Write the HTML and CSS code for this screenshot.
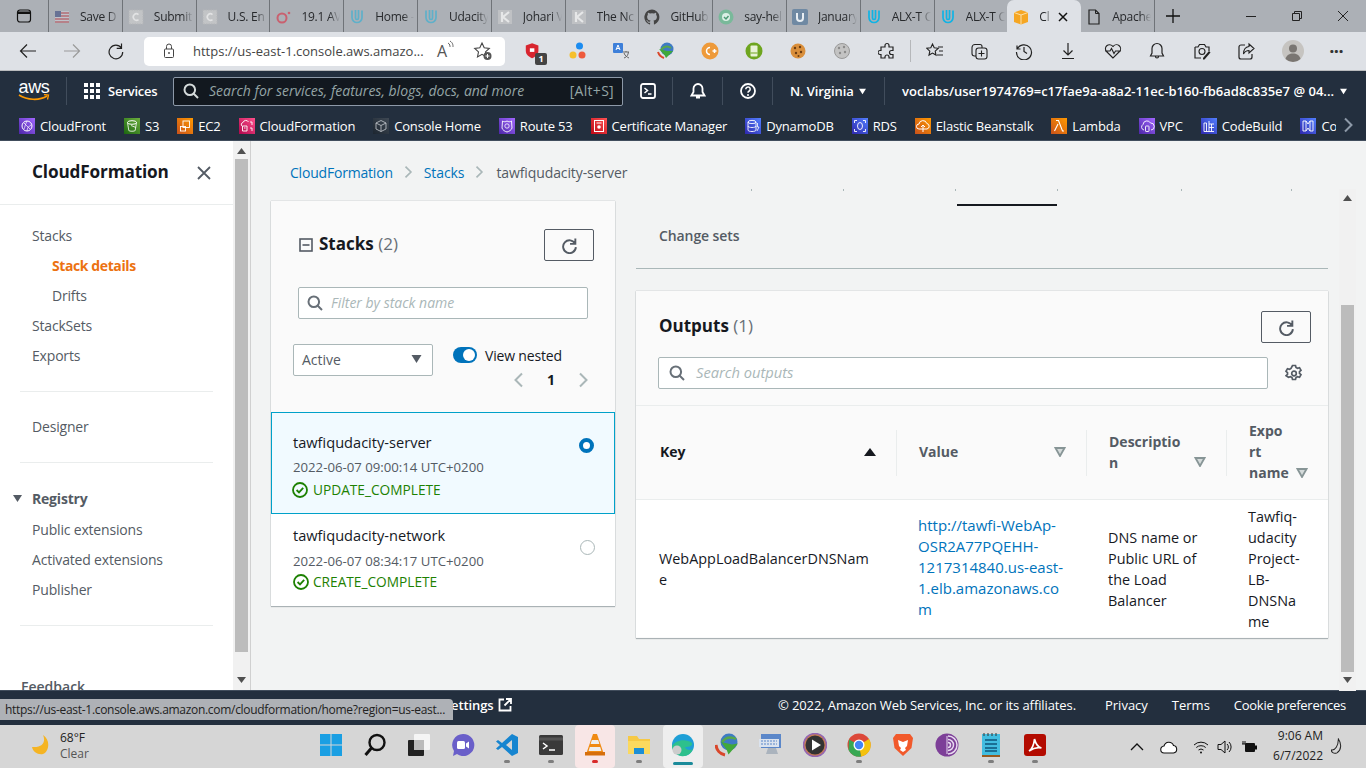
FILE: index.html
```html
<!DOCTYPE html>
<html lang="en">
<head>
<meta charset="utf-8">
<title>CloudFormation</title>
<link rel="stylesheet" href="styles.css">
</head>
<body>
<svg class="defs" width="0" height="0">
  <symbol id="u" viewBox="0 0 16 16"><path d="M3 1.500v7a5 5 0 0 0 10 0v-7M6.500 1v8a1.500 1.500 0 0 0 3 0V1" fill="none" stroke="currentColor" stroke-width="1.700"/></symbol>
  <symbol id="chip" viewBox="0 0 16 16"><rect x="1" y="1" width="14" height="14" fill="#c2c4c6" stroke="#b4b6b9" stroke-dasharray="1.500 1"/><path d="M10.500 5.500a3.200 3.200 0 1 0 0 5" fill="none" stroke="#e2e3e4" stroke-width="1.600"/></symbol>
  <symbol id="k" viewBox="0 0 16 16"><rect x="1" y="1" width="14" height="14" fill="#bfc1c4"/><path d="M5 3v10M12 3 6 8l6 5" fill="none" stroke="#e6e7e8" stroke-width="2.200"/></symbol>
  <symbol id="refresh" viewBox="0 0 16 16"><path d="M13.500 1.500v5h-5M13.300 6.300A6 6 0 1 0 14 9.500" fill="none" stroke="currentColor" stroke-width="1.800"/></symbol>
  <symbol id="search" viewBox="0 0 16 16"><circle cx="6.800" cy="6.800" r="5.300" fill="none" stroke="currentColor" stroke-width="2"/><path d="m10.500 10.500 4.500 4.500" stroke="currentColor" stroke-width="2"/></symbol>
  <symbol id="check" viewBox="0 0 16 16"><circle cx="8" cy="8" r="7" fill="none" stroke="currentColor" stroke-width="1.800"/><path d="m4.600 8 2.400 2.400 4.200-4.600" fill="none" stroke="currentColor" stroke-width="1.800"/></symbol>
  <symbol id="caret" viewBox="0 0 12 10"><path d="M1 1h10L6 9z" fill="currentColor"/></symbol>
  <symbol id="sortd" viewBox="0 0 12 10"><path d="M1.500 1h9L6 9z" fill="#d5dbdb" stroke="currentColor" stroke-width="1.800"/></symbol>
  <symbol id="chev" viewBox="0 0 12 16"><path d="M3 1.500 9.500 8 3 14.500" fill="none" stroke="currentColor" stroke-width="2"/></symbol>
  <symbol id="chevl" viewBox="0 0 12 16"><path d="M9 1.500 2.500 8 9 14.500" fill="none" stroke="currentColor" stroke-width="2"/></symbol>
  <symbol id="scr-up" viewBox="0 0 9 6"><path d="M0 6 4.500 0 9 6z" fill="currentColor"/></symbol>
  <symbol id="scr-dn" viewBox="0 0 9 6"><path d="M0 0h9L4.500 6z" fill="currentColor"/></symbol>
  <symbol id="b-front" viewBox="0 0 16 16"><circle cx="8" cy="8" r="5" fill="none" stroke="#fff"/><path d="M5 5c2 2 4 4 6 6M5 11c1-2 1-4 3-8M8 13c0-3 2-5 4-6" fill="none" stroke="#fff" stroke-width=".7"/></symbol>
  <symbol id="b-s3" viewBox="0 0 16 16"><ellipse cx="8" cy="4.500" rx="4.500" ry="1.800" fill="none" stroke="#fff"/><path d="m3.500 4.500 1.300 8c.5 1 5.900 1 6.400 0l1.300-8M7 7.500l5 2" fill="none" stroke="#fff" stroke-width=".8"/></symbol>
  <symbol id="b-ec2" viewBox="0 0 16 16"><rect x="6" y="3" width="6.500" height="6.500" fill="none" stroke="#fff" stroke-width=".9"/><rect x="3.500" y="8.500" width="5" height="4.500" fill="none" stroke="#fff" stroke-width=".9"/></symbol>
  <symbol id="b-cf" viewBox="0 0 16 16"><path d="M3 8a2 2 0 0 1 1-3.500A3 3 0 0 1 9.500 4M3.500 8H8M3.500 8v5H8V8M5 10h1.500M11 4h2v3M11 10h2v3" fill="none" stroke="#fff" stroke-width=".9"/></symbol>
  <symbol id="b-home" viewBox="0 0 16 16"><path d="M8 2.500 13 5v6l-5 2.500L3 11V5zM3 5l5 2.500L13 5M8 7.500v6" fill="none" stroke="#c8ccd0" stroke-width=".8"/></symbol>
  <symbol id="b-r53" viewBox="0 0 16 16"><path d="M3.500 3c1.500 1 3 1 4.500 0 1.500 1 3 1 4.500 0L13 10c-.5 2-3 3.500-5 4-2-.5-4.500-2-5-4z" fill="none" stroke="#fff" stroke-width=".9"/><circle cx="8" cy="8" r="2.200" fill="none" stroke="#fff" stroke-width=".8"/></symbol>
  <symbol id="b-cert" viewBox="0 0 16 16"><rect x="3.500" y="2.500" width="9" height="11" fill="none" stroke="#fff"/><path d="M5.500 5h5" stroke="#fff"/><circle cx="8" cy="9" r="1.800" fill="#fff"/></symbol>
  <symbol id="b-ddb" viewBox="0 0 16 16"><ellipse cx="7" cy="4" rx="4" ry="1.600" fill="none" stroke="#fff" stroke-width=".9"/><path d="M3 4v8c0 2 8 2 8 0V4M3 8c0 2 8 2 8 0" fill="none" stroke="#fff" stroke-width=".9"/><path d="M12.500 5v4h1.500l-2 4" fill="none" stroke="#fff" stroke-width=".8"/></symbol>
  <symbol id="b-rds" viewBox="0 0 16 16"><path d="M2.500 5V2.500H5M11 2.500h2.500V5M2.500 11v2.500H5M13.500 11v2.500H11" fill="none" stroke="#fff" stroke-width=".9"/><ellipse cx="8" cy="8" rx="2.500" ry="3.500" fill="none" stroke="#fff" stroke-width=".9"/></symbol>
  <symbol id="b-eb" viewBox="0 0 16 16"><path d="M4 11a2.500 2.500 0 0 1 0-5 4 4 0 0 1 7.800-.5A2.800 2.800 0 0 1 12 11zM8 7v7M6 9l2-2 2 2" fill="none" stroke="#fff"/></symbol>
  <symbol id="b-lam" viewBox="0 0 16 16"><path d="M5 2.500h2.500l4 10.500H13M7 6l-3.500 7" fill="none" stroke="#fff" stroke-width="1.100"/></symbol>
  <symbol id="b-vpc" viewBox="0 0 16 16"><path d="M5 12a3 3 0 0 1-1-5.500A4 4 0 0 1 11.500 5 3.500 3.500 0 0 1 12 12" fill="none" stroke="#fff" stroke-width=".9"/><rect x="6.500" y="8" width="3.500" height="5.500" rx=".6" fill="none" stroke="#fff" stroke-width=".9"/></symbol>
  <symbol id="b-build" viewBox="0 0 16 16"><path d="M3 13.500h10M3 13.500V5h2.500v8.500M8 13.500V3M8 6h5M10.500 6v7.500M8 9.500h5" fill="none" stroke="#fff" stroke-width=".9"/></symbol>
  <symbol id="b-co" viewBox="0 0 16 16"><path d="M3 3h3l2 3 2-3h3v10h-3l-2-3-2 3H3zM6 3v10M10 3v10" fill="none" stroke="#fff" stroke-width=".9"/></symbol>
</svg>

<div class="app">
  <header class="tabs">
    <div class="tab-ctl"><svg width="16" height="16" viewBox="0 0 16 16"><rect x="1.500" y="2" width="13" height="12" rx="2.500" fill="none" stroke="#111" stroke-width="1.200"/><path d="M2 3.500h12v2.500H2z" fill="#111"/></svg></div>
    <div class="tab"><svg class="fav dim" viewBox="0 0 16 16"><path d="M1 2h14v12H1z" fill="#c3c6ce"/><path d="M1 2h6v6H1z" fill="#5c6890"/><path d="M7 4h8M7 7h8M1 10h14M1 13h14" stroke="#b5606a" stroke-width="1.300"/></svg><span class="tab-t">Save D</span></div>
    <div class="tab"><svg class="fav"><use href="#chip"/></svg><span class="tab-t">Submit</span></div>
    <div class="tab"><svg class="fav"><use href="#chip"/></svg><span class="tab-t">U.S. En</span></div>
    <div class="tab"><svg class="fav" viewBox="0 0 16 16"><circle cx="7" cy="9" r="4.500" fill="none" stroke="#c9606f" stroke-width="2"/><circle cx="14" cy="4" r="1.300" fill="#c9606f"/></svg><span class="tab-t">19.1 AV</span></div>
    <div class="tab"><svg class="fav tl"><use href="#u"/></svg><span class="tab-t">Home -</span></div>
    <div class="tab"><svg class="fav tl"><use href="#u"/></svg><span class="tab-t">Udacity</span></div>
    <div class="tab"><svg class="fav"><use href="#k"/></svg><span class="tab-t">Johari V</span></div>
    <div class="tab"><svg class="fav"><use href="#k"/></svg><span class="tab-t">The Nc</span></div>
    <div class="tab"><svg class="fav" viewBox="0 0 16 16"><path d="M8 .500a7.700 7.700 0 0 0-2.400 15c.4 0 .5-.2.500-.4v-1.400c-2.100.5-2.600-1-2.600-1-.3-.900-.9-1.100-.9-1.100-.7-.5 0-.5 0-.5.800 0 1.200.8 1.200.8.700 1.200 1.800.9 2.300.7 0-.5.300-.9.500-1.100-1.700-.2-3.500-.9-3.500-3.800 0-.8.300-1.500.8-2-.1-.2-.3-1 .1-2 0 0 .6-.2 2.100.8a7 7 0 0 1 3.800 0c1.500-1 2.100-.8 2.100-.8.400 1 .2 1.800.1 2 .5.500.8 1.200.8 2 0 2.900-1.800 3.600-3.500 3.800.3.200.5.700.5 1.400v2.100c0 .2.100.4.500.4A7.700 7.700 0 0 0 8 .500" fill="#444"/></svg><span class="tab-t">GitHub</span></div>
    <div class="tab"><svg class="fav" viewBox="0 0 16 16"><circle cx="8" cy="8" r="7.500" fill="#79b99a"/><circle cx="8" cy="8" r="4" fill="#dcefe6"/><path d="m6 8 2 2 2.500-3" fill="none" stroke="#4c9a74" stroke-width="1.500"/></svg><span class="tab-t">say-hel</span></div>
    <div class="tab"><svg class="fav" viewBox="0 0 16 16"><rect width="16" height="16" rx="2" fill="#6f89a3"/><path d="M5 4v5a3 3 0 0 0 6 0V4" fill="none" stroke="#e8eef3" stroke-width="2"/></svg><span class="tab-t">January</span></div>
    <div class="tab"><svg class="fav bl"><use href="#u"/></svg><span class="tab-t">ALX-T C</span></div>
    <div class="tab"><svg class="fav bl"><use href="#u"/></svg><span class="tab-t">ALX-T C</span></div>
    <div class="tab tab-active"><svg class="fav" viewBox="0 0 16 16"><path d="M8 1 15 3.500v9.500L8 15.500 1 13V3.500z" fill="#f5a623"/><path d="M1 3.500 8 6l7-2.500M8 6v9.500" fill="none" stroke="#fce0a8" stroke-width="1"/></svg><span class="tab-t tab-t-s">Clo</span><svg class="tab-x" viewBox="0 0 10 10"><path d="m1 1 8 8M9 1 1 9" stroke="#111" stroke-width="1.500"/></svg></div>
    <div class="tab tab-last"><svg class="fav" viewBox="0 0 16 16"><path d="M3 1h6.500L13 4.500V15H3z" fill="none" stroke="#222" stroke-width="1.200"/><path d="M9.500 1v3.500H13" fill="none" stroke="#222"/></svg><span class="tab-t">Apache</span></div>
    <div class="tab-new"><svg width="16" height="16" viewBox="0 0 16 16"><path d="M8 1v14M1 8h14" stroke="#111" stroke-width="1.300"/></svg></div>
    <div class="win">
      <svg width="12" height="12" viewBox="0 0 12 12"><path d="M1 6.500h10" stroke="#222"/></svg>
      <svg width="12" height="12" viewBox="0 0 12 12"><path d="M1.500 3.500h7v7h-7zM3.500 3.500v-2h7v7h-2" fill="none" stroke="#222"/></svg>
      <svg width="12" height="12" viewBox="0 0 12 12"><path d="m1 1 10 10M11 1 1 11" stroke="#222"/></svg>
    </div>
  </header>

  <nav class="toolbar">
    <div class="tb-nav">
      <svg class="tb-ic" viewBox="0 0 18 18"><path d="M17 9H1.500M8 2.500 1.500 9 8 15.500" fill="none" stroke="#222" stroke-width="1.200"/></svg>
      <svg class="tb-ic" viewBox="0 0 18 18"><path d="M1 9h15.500M10 2.500 16.500 9 10 15.500" fill="none" stroke="#9a9a9a" stroke-width="1.200"/></svg>
      <svg class="tb-ic" viewBox="0 0 18 18"><path d="M14.500 1.500v4.800H9.700M14.400 6a6.800 6.800 0 1 0 1.300 4" fill="none" stroke="#222" stroke-width="1.200"/></svg>
    </div>
    <div class="address">
      <svg width="14" height="16" viewBox="0 0 14 16"><rect x="2.500" y="6" width="9" height="8.500" rx="1" fill="none" stroke="#444"/><path d="M4.500 6V3.500a2.500 2.500 0 0 1 5 0V6" fill="none" stroke="#444"/><circle cx="7" cy="10" r=".9" fill="#444"/></svg>
      <span class="url">https://us-east-1.console.aws.amazo...</span>
      <span class="aloud">A<svg width="7" height="12" viewBox="0 0 7 12"><path d="M1 3c2 1 2 3 2 4M3 1c3 2 3 4 3 6" fill="none" stroke="#555" stroke-width=".9"/></svg></span>
      <svg width="20" height="20" viewBox="0 0 20 20"><path d="m9 2 2.200 4.800 5.100.6-3.800 3.500 1 5-4.500-2.600-4.500 2.600 1-5L1.700 7.400l5.100-.6z" fill="none" stroke="#444" stroke-width="1.100"/><circle cx="14.500" cy="15" r="4" fill="#555"/><path d="M14.500 13v4M12.500 15h4" stroke="#fff"/></svg>
    </div>
    <div class="tb-ext">
      <span class="cell"><svg class="ic18" viewBox="0 0 18 20"><path d="M8 1.500 15 4v6c0 4-3.500 6.500-7 8-3.500-1.500-7-4-7-8V4z" fill="#d8252f"/><rect x="5.500" y="7" width="5" height="4" fill="#fff"/></svg><span class="badge">1</span></span>
      <span class="cell"><svg class="ic18" viewBox="0 0 18 18"><circle cx="11.500" cy="4" r="3.500" fill="#1c8cf0"/><circle cx="5" cy="13" r="3.500" fill="#f6c02c"/><circle cx="14" cy="13" r="3.500" fill="#ee5a3c"/></svg></span>
      <span class="cell"><svg class="ic18" viewBox="0 0 18 18"><rect x="1" y="1" width="10" height="10" rx="1" fill="#3d7fd9"/><path d="m4 8 2-5 2 5M4.800 6.500h2.400" fill="none" stroke="#fff"/><path d="M11 10h6M14 9v1M12 16c3-1 4-3 4.500-6M12 11c1 3 3 4 5 5" fill="none" stroke="#666"/></svg></span>
      <span class="cell"><svg class="ic18" viewBox="0 0 18 18"><circle cx="10" cy="7" r="6.500" fill="#3e7bc4"/><path d="M4 8c2-3 6-5 10-2" fill="none" stroke="#58a84a" stroke-width="2"/><path d="m2 7 8 2 6 0-7 7-1.500-3z" fill="#3fa83a"/><path d="M1 10c1 3 3 5 6 6" fill="none" stroke="#d9472b" stroke-width="2"/></svg></span>
      <span class="cell"><svg class="ic18" viewBox="0 0 18 18"><circle cx="9" cy="9" r="8.500" fill="#ee9a3a"/><path d="M9 5.500a3.500 3.500 0 1 0 0 7M11.500 9h4M13.500 7v4" fill="none" stroke="#fff" stroke-width="1.500"/></svg></span>
      <span class="cell"><svg class="ic18" viewBox="0 0 18 18"><circle cx="9" cy="9" r="8.500" fill="#6ea51f"/><rect x="5.500" y="3.500" width="7" height="11" rx="1" fill="#e8f2d6"/><path d="M5.500 11h7" stroke="#6ea51f"/></svg></span>
      <span class="cell"><svg class="ic18" viewBox="0 0 18 18"><circle cx="9" cy="9" r="7.500" fill="#d98f3c"/><circle cx="6" cy="6" r="1.200" fill="#6b3d12"/><circle cx="11" cy="5" r="1.200" fill="#6b3d12"/><circle cx="12" cy="10" r="1.200" fill="#6b3d12"/><circle cx="7" cy="11" r="1.200" fill="#6b3d12"/><circle cx="9.500" cy="14" r="1" fill="#6b3d12"/></svg></span>
      <span class="cell"><svg class="ic18" viewBox="0 0 18 18"><circle cx="9" cy="9" r="7.500" fill="#c3c3c3" stroke="#999"/><circle cx="6" cy="6" r="1.200" fill="#8b8b8b"/><circle cx="11" cy="5" r="1.200" fill="#8b8b8b"/><circle cx="12" cy="10" r="1.200" fill="#8b8b8b"/><circle cx="7" cy="11" r="1.200" fill="#8b8b8b"/></svg></span>
      <span class="cell"><svg class="ic18" viewBox="0 0 18 18"><path d="M7 3.500a2 2 0 0 1 4 0V5h4v3.500h-1.500a2 2 0 0 0 0 4H15V16H11v-1a2 2 0 0 0-4 0v1H3v-3.500H2a2 2 0 0 1 0-4h1V5h4z" fill="none" stroke="#222" stroke-width="1.200"/></svg></span>
      <span class="tb-sep"></span>
      <span class="cell cell-b"><svg class="ic18" viewBox="0 0 18 18"><path d="m6.500 2 1.700 3.800 4 .5-3 2.800.8 4-3.500-2-3.500 2 .8-4-3-2.800 4-.5z" fill="none" stroke="#222" stroke-width="1.100"/><path d="M12 5h5M13 9h4M11 13h6" stroke="#222" stroke-width="1.100"/></svg></span>
      <span class="cell cell-b"><svg class="ic18" viewBox="0 0 18 18"><rect x="6" y="6" width="11" height="11" rx="2.500" fill="none" stroke="#222" stroke-width="1.100"/><path d="M11.500 8.500v6M8.500 11.500h6M6 14H4.500A2.500 2.500 0 0 1 2 11.500V5.500A3 3 0 0 1 5 2.500h5a2 2 0 0 1 2 2V6" fill="none" stroke="#222" stroke-width="1.100"/></svg></span>
      <span class="cell cell-b"><svg class="ic18" viewBox="0 0 18 18"><path d="M2 3.500v3.500h3.500M2.300 7A7.500 7.500 0 1 1 1.500 10M9 5v4.500l3 2" fill="none" stroke="#222" stroke-width="1.200"/></svg></span>
      <span class="cell cell-b"><svg class="ic18" viewBox="0 0 18 18"><path d="M9 1v12M4.500 8.500 9 13l4.500-4.500M3 16.500h12" fill="none" stroke="#222" stroke-width="1.200"/></svg></span>
      <span class="cell cell-b"><svg class="ic18" viewBox="0 0 18 18"><path d="M9 16 2.500 9.500a4 4 0 0 1 6-5.500l.5.500.5-.5a4 4 0 0 1 6 5.500zM1 9h5l1.500-2.500 2.500 5L11.500 9H17" fill="none" stroke="#222" stroke-width="1.100"/></svg></span>
      <span class="cell cell-b"><svg class="ic18" viewBox="0 0 18 18"><path d="M9 1.500a5 5 0 0 0-5 5V11l-1.500 3h13L14 11V6.500a5 5 0 0 0-5-5zM7.500 14.500a1.500 1.500 0 0 0 3 0" fill="none" stroke="#222" stroke-width="1.200"/></svg></span>
      <span class="cell cell-b"><svg class="ic18" viewBox="0 0 18 18"><path d="M2 5h3l1.500-2.500h5L13 5h3v4M2 5v11h6" fill="none" stroke="#222" stroke-width="1.200"/><circle cx="9" cy="9.500" r="3" fill="none" stroke="#222" stroke-width="1.100"/><path d="m10 16 6-7 1.500 1.500-6 7H10z" fill="#222"/></svg></span>
      <span class="cell cell-b"><svg class="ic18" viewBox="0 0 18 18"><path d="M8 3H4a2 2 0 0 0-2 2v10a2 2 0 0 0 2 2h9a2 2 0 0 0 2-2v-3" fill="none" stroke="#222" stroke-width="1.200"/><path d="m12 2 5 4.500L12 11V8.500c-3 0-4.500 1.500-5.500 3.500 0-4 2-7 5.500-7.500z" fill="none" stroke="#222" stroke-width="1.100"/></svg></span>
      <span class="cell cell-b"><svg class="avatar" viewBox="0 0 22 22"><circle cx="11" cy="11" r="11" fill="#c6c4c1"/><circle cx="11" cy="8.500" r="4" fill="#7a7672"/><path d="M3.500 19c1-4 4-5.500 7.500-5.500s6.500 1.500 7.500 5.500a11 11 0 0 1-15 0z" fill="#7a7672"/></svg></span>
      <span class="more">···</span>
    </div>
  </nav>

  <div class="aws-nav">
    <div class="aws-top">
      <span class="logo">
        <span class="logo-t">aws</span>
        <svg width="32" height="8" viewBox="0 0 32 8"><path d="M1 1c8 5 20 6 28 1" fill="none" stroke="#f90" stroke-width="1.700"/><path d="m26 .5 4.500.5-1 4.500" fill="none" stroke="#f90" stroke-width="1.300"/></svg>
      </span>
      <i class="div d1"></i>
      <span class="services"><svg width="16" height="16" viewBox="0 0 16 16"><path d="M0 0h4v4H0zM6 0h4v4H6zM12 0h4v4h-4zM0 6h4v4H0zM6 6h4v4H6zM12 6h4v4h-4zM0 12h4v4H0zM6 12h4v4H6zM12 12h4v4h-4z" fill="#fff"/></svg><b>Services</b></span>
      <div class="global-search">
        <svg width="16" height="16" class="gs-ic"><use href="#search"/></svg>
        <span class="gs-t">Search for services, features, blogs, docs, and more</span>
        <span class="gs-k">[Alt+S]</span>
      </div>
      <span class="nic shell"><svg width="16" height="16" viewBox="0 0 16 16"><rect x="1" y="1" width="14" height="14" rx="2" fill="none" stroke="#fff" stroke-width="1.800"/><path d="m4.500 5 3 2.500-3 2.500M8 11h3.500" fill="none" stroke="#fff" stroke-width="1.500"/></svg></span>
      <i class="div"></i>
      <span class="nic"><svg width="16" height="18" viewBox="0 0 16 18"><path d="M8 2a4.500 4.500 0 0 0-4.500 4.500V10L1.500 13.500h13L12.500 10V6.500A4.500 4.500 0 0 0 8 2zM6 15.500h4" fill="none" stroke="#fff" stroke-width="1.800"/></svg></span>
      <i class="div"></i>
      <span class="nic"><svg width="16" height="16" viewBox="0 0 16 16"><circle cx="8" cy="8" r="7" fill="none" stroke="#fff" stroke-width="1.800"/><path d="M5.800 6.200a2.200 2.200 0 1 1 3.400 1.800c-.8.500-1.200 1-1.200 1.800" fill="none" stroke="#fff" stroke-width="1.500"/><circle cx="8" cy="12" r="1" fill="#fff"/></svg></span>
      <i class="div"></i>
      <span class="region"><b>N. Virginia</b><svg class="wc" width="9" height="7"><use href="#caret"/></svg></span>
      <i class="div"></i>
      <span class="account"><b>voclabs/user1974769=c17fae9a-a8a2-11ec-b160-fb6ad8c835e7 @ 04...</b><svg class="wc" width="9" height="7"><use href="#caret"/></svg></span>
    </div>
    <div class="bookmarks">
      <a class="bm"><svg class="bmi c-pur"><use href="#b-front"/></svg>CloudFront</a>
      <a class="bm"><svg class="bmi c-grn"><use href="#b-s3"/></svg>S3</a>
      <a class="bm"><svg class="bmi c-org"><use href="#b-ec2"/></svg>EC2</a>
      <a class="bm"><svg class="bmi c-pnk"><use href="#b-cf"/></svg>CloudFormation</a>
      <a class="bm"><svg class="bmi c-dk"><use href="#b-home"/></svg>Console Home</a>
      <a class="bm"><svg class="bmi c-pur"><use href="#b-r53"/></svg>Route 53</a>
      <a class="bm"><svg class="bmi c-red"><use href="#b-cert"/></svg>Certificate Manager</a>
      <a class="bm"><svg class="bmi c-blu"><use href="#b-ddb"/></svg>DynamoDB</a>
      <a class="bm"><svg class="bmi c-blu"><use href="#b-rds"/></svg>RDS</a>
      <a class="bm"><svg class="bmi c-org"><use href="#b-eb"/></svg>Elastic Beanstalk</a>
      <a class="bm"><svg class="bmi c-org"><use href="#b-lam"/></svg>Lambda</a>
      <a class="bm"><svg class="bmi c-pur"><use href="#b-vpc"/></svg>VPC</a>
      <a class="bm"><svg class="bmi c-blu"><use href="#b-build"/></svg>CodeBuild</a>
      <a class="bm bm-cut"><svg class="bmi c-blu"><use href="#b-co"/></svg>Co</a>
      <svg class="bm-next" width="12" height="16"><use href="#chev"/></svg>
    </div>
  </div>

  <main class="main">
    <aside class="side">
      <div class="side-in">
        <div class="side-h"><span class="side-title">CloudFormation</span><svg width="14" height="14" viewBox="0 0 14 14"><path d="m1 1 12 12M13 1 1 13" stroke="#545b64" stroke-width="1.800"/></svg></div>
        <ul class="side-l">
          <li>Stacks</li>
          <li class="sub act">Stack details</li>
          <li class="sub">Drifts</li>
          <li>StackSets</li>
          <li>Exports</li>
        </ul>
        <hr class="side-hr">
        <ul class="side-l side-l2"><li>Designer</li></ul>
        <hr class="side-hr">
        <div class="side-reg"><svg width="11" height="9"><use href="#caret"/></svg><b>Registry</b></div>
        <ul class="side-l side-l3">
          <li>Public extensions</li>
          <li>Activated extensions</li>
          <li>Publisher</li>
        </ul>
        <hr class="side-hr">
        <div class="feedback">Feedback</div>
      </div>
      <div class="scr side-scr">
        <svg class="scr-a" width="9" height="6"><use href="#scr-up"/></svg>
        <div class="thumb th-side"></div>
        <svg class="scr-a" width="9" height="6"><use href="#scr-dn"/></svg>
      </div>
    </aside>

    <div class="content">
      <div class="crumbs">
        <a>CloudFormation</a><svg width="10" height="14"><use href="#chev"/></svg><a class="cr-2">Stacks</a><svg width="10" height="14"><use href="#chev"/></svg><span>tawfiqudacity-server</span>
      </div>
      <div class="cols">
        <section class="card stacks">
          <div class="st-h">
            <svg class="minus" width="14" height="14" viewBox="0 0 14 14"><rect x="1" y="1" width="12" height="12" fill="none" stroke="#545b64" stroke-width="1.600"/><path d="M3.500 7h7" stroke="#545b64" stroke-width="1.600"/></svg>
            <h2 class="h2">Stacks <span>(2)</span></h2>
            <button class="rbtn"><svg width="17" height="17"><use href="#refresh"/></svg></button>
          </div>
          <div class="filter"><svg width="16" height="16"><use href="#search"/></svg><span>Filter by stack name</span></div>
          <div class="st-ctl">
            <div class="select"><span>Active</span><svg width="13" height="10"><use href="#caret"/></svg></div>
            <div class="st-right">
              <div class="nested"><span class="toggle"></span><span>View nested</span></div>
              <div class="pager"><svg width="12" height="16"><use href="#chevl"/></svg><b>1</b><svg width="12" height="16"><use href="#chev"/></svg></div>
            </div>
          </div>
          <div class="row row-sel">
            <div class="row-t"><div class="nm">tawfiqudacity-server</div><div class="dt">2022-06-07 09:00:14 UTC+0200</div><div class="stat"><svg width="16" height="16"><use href="#check"/></svg>UPDATE_COMPLETE</div></div>
            <span class="radio on"></span>
          </div>
          <div class="row row-2">
            <div class="row-t"><div class="nm">tawfiqudacity-network</div><div class="dt">2022-06-07 08:34:17 UTC+0200</div><div class="stat"><svg width="16" height="16"><use href="#check"/></svg>CREATE_COMPLETE</div></div>
            <span class="radio"></span>
          </div>
        </section>

        <div class="right">
          <div class="ticks"><i></i><i></i><i></i><i></i><i></i><i></i></div>
          <div class="tabline"></div>
          <div class="rtabs">Change sets</div>
          <section class="card outputs">
            <div class="out-h"><h2 class="h2">Outputs <span>(1)</span></h2><button class="rbtn rbtn-o"><svg width="17" height="17"><use href="#refresh"/></svg></button></div>
            <div class="out-s">
              <div class="filter filter-o"><svg width="16" height="16"><use href="#search"/></svg><span>Search outputs</span></div>
              <svg class="gear" width="18" height="18" viewBox="0 0 18 18"><path d="M7.500 1.500h3l.5 2 1.500.8 2-.6 1.500 2.600-1.500 1.400v1.600l1.500 1.400-1.500 2.600-2-.6-1.500.8-.5 2h-3l-.5-2-1.500-.8-2 .6L1 11.700l1.500-1.400V8.700L1 7.300l1.500-2.600 2 .6L6 4.500z" fill="none" stroke="#545b64" stroke-width="1.700"/><circle cx="9" cy="9.500" r="2.300" fill="none" stroke="#545b64" stroke-width="1.700"/></svg>
            </div>
            <div class="tbl">
              <div class="th"><span>Key</span><svg class="so so-d" width="12" height="10"><use href="#scr-up"/></svg></div>
              <div class="th th-d"><span>Value</span><svg class="so" width="12" height="10"><use href="#sortd"/></svg></div>
              <div class="th th-d"><span>Descriptio<br>n</span><svg class="so so-e" width="12" height="10"><use href="#sortd"/></svg></div>
              <div class="th th-d th-l"><span>Expo<br>rt<br>name</span><svg class="so so-n" width="12" height="10"><use href="#sortd"/></svg></div>
              <div class="td td-1">WebAppLoadBalancerDNSNam<br>e</div>
              <div class="td td-2"><a>http://tawfi-WebAp-<br>OSR2A77PQEHH-<br>1217314840.us-east-<br>1.elb.amazonaws.co<br>m</a></div>
              <div class="td td-3">DNS name or<br>Public URL of<br>the Load<br>Balancer</div>
              <div class="td td-4">Tawfiq-<br>udacity<br>Project-<br>LB-<br>DNSNa<br>me</div>
            </div>
          </section>
        </div>

        <div class="scr main-scr">
          <svg class="scr-a" width="9" height="6"><use href="#scr-up"/></svg>
          <div class="thumb th-main"></div>
          <svg class="scr-a" width="9" height="6"><use href="#scr-dn"/></svg>
        </div>
      </div>
    </div>
  </main>

  <footer class="foot">
    <span class="f-set">Settings<svg width="14" height="14" viewBox="0 0 14 14"><path d="M6 1.500H1.500v11h11V8M8 1h5v5M13 1 6.500 7.500" fill="none" stroke="#fff" stroke-width="1.800"/></svg></span>
    <span class="f-copy">© 2022, Amazon Web Services, Inc. or its affiliates.</span>
    <span class="f-l">Privacy</span><span class="f-l">Terms</span><span class="f-l f-c">Cookie preferences</span>
  </footer>

  <div class="taskbar">
    <div class="weather">
      <svg width="20" height="20" viewBox="0 0 20 20"><path d="M13 0c3 6 0 13-11 12 1 5 6 8 11 7 6-2 8-14 0-19z" fill="#f5b423"/></svg>
      <div class="w-t"><div class="w1">68°F</div><div class="w2">Clear</div></div>
    </div>
    <div class="tk-apps">
      <span class="app-c"><svg class="tk" viewBox="0 0 24 24"><path d="M1 1h10.500v10.500H1zM12.500 1H23v10.500H12.500zM1 12.500h10.500V23H1zM12.500 12.500H23V23H12.500z" fill="#1a9fe3"/></svg></span>
      <span class="app-c"><svg class="tk" viewBox="0 0 24 24"><circle cx="14" cy="9.500" r="7.500" fill="none" stroke="#111" stroke-width="2.400"/><path d="m8.500 15-6 7" stroke="#111" stroke-width="3"/></svg></span>
      <span class="app-c"><svg class="tk" viewBox="0 0 24 24"><rect x="7" y="1" width="16" height="16" rx="1" fill="#f5f5f5"/><rect x="1" y="7" width="16" height="16" rx="1" fill="#222"/><rect x="7" y="7" width="10" height="10" fill="#bbb"/></svg></span>
      <span class="app-c"><svg class="tk" viewBox="0 0 24 24"><path d="M12 1a11 11 0 1 1-6 20l-4 2 1-5A11 11 0 0 1 12 1z" fill="#6a5fc9"/><rect x="6" y="8" width="8" height="8" rx="1.500" fill="#fff"/><path d="m15 10.500 3-2v7l-3-2z" fill="#fff"/></svg></span>
      <span class="app-c dot"><svg class="tk" viewBox="0 0 24 24"><path d="M17 1 23 4v16l-6 3L7 14l-4 3-2-1.500L5 12 1 8.500 3 7l4 3z" fill="#1685d0"/><path d="M17 7 11 12l6 5z" fill="#d6d6d6"/></svg></span>
      <span class="app-c dot"><svg class="tk" viewBox="0 0 24 24"><rect y="2" width="24" height="20" rx="1.500" fill="#3a3a3a"/><path d="M0 6h24" stroke="#555" stroke-width="3"/><path d="m4 10 4 3-4 3M10 17h6" fill="none" stroke="#fff" stroke-width="1.500"/></svg></span>
      <span class="app-c dot hot"><svg class="tk" viewBox="0 0 24 24"><path d="M10 1h4l6.500 19h-17z" fill="#f08a12"/><path d="M8.800 7h6.400l1.200 4H7.600z" fill="#eee"/><path d="M6.800 14h10.400l1.200 4H5.600z" fill="#eee"/><path d="M2 19h20v3.500H2z" fill="#d66f0c"/></svg></span>
      <span class="app-c dot"><svg class="tk" viewBox="0 0 24 24"><path d="M1 3h9l2 3h11v15H1z" fill="#f6c945"/><path d="M1 8h22v13H1z" fill="#fbd95f"/><path d="M7 15h10v6H7z" fill="#1c8fd6"/></svg></span>
      <span class="app-c run"><svg class="tk" viewBox="0 0 24 24"><circle cx="12" cy="12" r="11" fill="#1e9fd6"/><path d="M1 13c3-6 14-8 20-3 1 3-3 4-7 4 1 3 5 4 8 2-2 5-7 8-12 7-5-1-9-5-9-10z" fill="#2dc08c"/><circle cx="6" cy="17" r="4.500" fill="#ccc"/></svg></span>
      <span class="app-c"><svg class="tk" viewBox="0 0 24 24"><circle cx="14" cy="9" r="8.500" fill="#3e7bc4"/><path d="M7 9c3-4 8-6 14-3" fill="none" stroke="#58a84a" stroke-width="2.500"/><path d="m6 9 11 2.500 6-1-9.500 11-2-5z" fill="#41a83a"/><path d="M1 12c.5 5 4 9 9 10" fill="none" stroke="#d9472b" stroke-width="3"/></svg></span>
      <span class="app-c"><svg class="tk" viewBox="0 0 24 24"><rect x="2" y="1" width="20" height="14" fill="#5b87c9"/><path d="M0 6h20v8H0z" fill="#dbe3ee"/><path d="M2 8h16M2 11h16" stroke="#5b87c9" stroke-dasharray="2 1"/><path d="M9 15h8l2 6H7z" fill="#aab3bd"/></svg></span>
      <span class="app-c"><svg class="tk" viewBox="0 0 24 24"><circle cx="12" cy="12" r="11.500" fill="#c47a57"/><circle cx="12" cy="12" r="11.500" fill="none" stroke="#9367b5" stroke-width="1.500"/><circle cx="12" cy="12" r="9.500" fill="#333"/><path d="M9 6.500 18 12l-9 5.500z" fill="#fff"/></svg></span>
      <span class="app-c dot"><svg class="tk" viewBox="0 0 24 24"><circle cx="12" cy="12" r="11.500" fill="#dc483a"/><path d="M12 12 22 6A11.500 11.500 0 0 1 14 23.500z" fill="#f4c20d"/><path d="M12 12 2 6.500l-.5 10.500A11.500 11.500 0 0 0 14 23.500z" fill="#38a853"/><circle cx="12" cy="12" r="5.500" fill="#fff"/><circle cx="12" cy="12" r="4.200" fill="#4285f4"/></svg></span>
      <span class="app-c"><svg class="tk" viewBox="0 0 24 24"><path d="M5 1h14l3 4-1.500 10L12 23l-8.500-8L2 5z" fill="#f1592b"/><path d="m7 7 5 2 5-2-1 6-2 2 1 2-3 2-3-2 1-2-2-2z" fill="#fff"/></svg></span>
      <span class="app-c"><svg class="tk" viewBox="0 0 24 24"><circle cx="12" cy="12" r="11.500" fill="#7d3f98"/><path d="M13 3a9 9 0 0 1 0 18M13 6.500a5.500 5.500 0 0 1 0 11M13 9.500a2.500 2.500 0 0 1 0 5" fill="none" stroke="#e7d9ef" stroke-width="1.500"/><path d="M12 3v18" stroke="#e7d9ef"/></svg></span>
      <span class="app-c dot"><svg class="tk" viewBox="0 0 24 24"><rect x="3" y="1" width="18" height="21" fill="#42bde0"/><path d="M3 22h18v2H3z" fill="#965a21"/><path d="M6 7h12M6 11h12M6 15h12M6 18h12" stroke="#1a6f94" stroke-width="2"/><path d="M5 0v3M9 0v3M13 0v3M17 0v3" stroke="#333"/></svg></span>
      <span class="app-c dot"><svg class="tk" viewBox="0 0 24 24"><rect x="1" y="1" width="22" height="22" rx="3" fill="#b30b00"/><path d="M6 18c3-2 5-7 5.500-12 1 4 3 8 7 9-4-1-8 0-12.500 3z" fill="none" stroke="#fff" stroke-width="1.700"/></svg></span>
    </div>
    <div class="tray">
      <svg width="14" height="8" viewBox="0 0 14 8"><path d="m1 7 6-6 6 6" fill="none" stroke="#111" stroke-width="1.300"/></svg>
      <svg class="t-cloud" width="18" height="14" viewBox="0 0 18 14"><path d="M4.500 13a3.500 3.500 0 0 1-.5-7 5 5 0 0 1 9.500-.5 3.800 3.800 0 0 1 0 7.500z" fill="#fff" stroke="#111" stroke-width="1.100"/></svg>
      <svg class="t-wifi" width="16" height="14" viewBox="0 0 16 14"><path d="M1 5a10 10 0 0 1 14 0M3.300 7.500a7 7 0 0 1 9.400 0M5.500 10a4 4 0 0 1 5 0" fill="none" stroke="#111"/><circle cx="8" cy="12.500" r="1" fill="#111"/></svg>
      <svg class="t-vol" width="16" height="16" viewBox="0 0 16 16"><path d="M1 5.500h3L8 2v12L4 10.500H1zM10 5a4 4 0 0 1 0 6M12 3a7 7 0 0 1 0 10" fill="none" stroke="#111"/></svg>
      <svg class="t-bat" width="16" height="16" viewBox="0 0 16 16"><rect x="4" y="4" width="10" height="9" rx="1" fill="#111"/><path d="M14 7h2v3h-2zM1 5h3M2 2v3M4 2v3" stroke="#111"/></svg>
      <div class="clock"><div>9:06 AM</div><div>6/7/2022</div></div>
      <svg class="t-moon" width="14" height="18" viewBox="0 0 14 18"><path d="M6 1c4 4 5 10 1 14-3 2-6 0-6-2 4 0 6-5 5-12z" fill="none" stroke="#222" transform="rotate(10 7 9)"/></svg>
    </div>
  </div>

  <div class="status">https://us-east-1.console.aws.amazon.com/cloudformation/home?region=us-east...</div>
</div>
</body>
</html>
```
FILE: styles.css
```css
* { box-sizing: border-box; }
html, body { margin: 0; padding: 0; height: 100%; overflow: hidden; }
body { font-family: "Open Sans", "Noto Sans", sans-serif; color: #16191f; background: #f2f3f3; }
.defs { position: absolute; }
ul { list-style: none; margin: 0; padding: 0; }
h2 { margin: 0; }
button { font: inherit; background: transparent; padding: 0; }
.app { position: relative; width: 1366px; height: 768px; display: flex; flex-direction: column; overflow: hidden; }

/* browser tabs */
.tabs { height: 32px; flex: none; display: flex; background: #acb0b6; font-size: 12px; }
.tab-ctl { width: 48px; display: flex; align-items: center; justify-content: center; }
.tab { width: 73.800px; height: 32px; padding: 6px 2px 0 5px; display: flex; align-items: flex-start; gap: 10px; border-left: 1px solid #6f7378; position: relative; flex: none; }
.tab > * { margin-top: 3px; }
.fav { width: 16px; height: 16px; flex: none; }
.dim { opacity: .85; }
.tl { color: #5fb0c9; }
.bl { color: #10b3e4; }
.tab-t { display: block; width: 39px; overflow: hidden; white-space: nowrap; color: #27292c; font-size: 12px; line-height: 16px; letter-spacing: -.25px; -webkit-mask-image: linear-gradient(90deg, #000 72%, transparent 100%); mask-image: linear-gradient(90deg, #000 72%, transparent 100%); }
.tab-active { background: #dee1e6; border-left: 0; border-radius: 7px 7px 0 0; padding-left: 6px; }
.tab-active + .tab { border-left: 0; }
.tab-t-s { width: 11px; }
.tab-x { width: 10px; height: 10px; margin-top: 6px; margin-left: -2px; flex: none; }
.tab-last { border-right: 1px solid #6f7378; }
.tab-new { width: 36px; display: flex; align-items: center; justify-content: center; }
.win { margin-left: auto; display: flex; align-items: center; gap: 34px; padding-right: 17px; }

/* toolbar */
.toolbar { height: 38px; flex: none; background: #dee1e6; display: flex; align-items: center; }
.tb-nav { display: flex; align-items: center; width: 144px; padding-left: 19px; gap: 26px; }
.tb-ic { width: 18px; height: 18px; }
.address { width: 361px; height: 29px; background: #fff; border-radius: 5px; display: flex; align-items: center; padding: 0 12px 0 18px; }
.url { font-size: 13px; color: #444; margin-left: 17px; white-space: nowrap; flex: 1; }
.aloud { font-size: 16px; color: #555; display: flex; margin-right: 19px; }
.tb-ext { display: flex; align-items: center; padding-left: 6px; }
.cell { position: relative; width: 44.200px; display: flex; justify-content: center; }
.cell-b { width: 44.500px; }
.ic18 { width: 18px; height: 18px; }
.badge { position: absolute; left: 24px; bottom: -5px; width: 12px; height: 12px; background: #444; border-radius: 2px; color: #fff; font-size: 9px; font-weight: 700; line-height: 12px; text-align: center; }
.tb-sep { width: 1px; height: 22px; background: #b5b7ba; margin: 0 2px 0 1px; }
.avatar { width: 22px; height: 22px; margin-left: 4px; }
.more { font-size: 18px; font-weight: 700; letter-spacing: -.5px; margin-left: 3px; color: #333; line-height: 1; width: 40px; text-align: center; }

/* aws nav */
.aws-nav { height: 70px; flex: none; background: #232f3e; color: #fff; border-top: 1px solid #b9bbbd; }
.aws-top { height: 40px; display: flex; align-items: center; padding-left: 18px; font-size: 13px; }
.logo { width: 32px; display: flex; flex-direction: column; align-items: center; }
.logo-t { font-family: "Liberation Sans", sans-serif; font-size: 18px; line-height: 13px; letter-spacing: -.3px; }
.div { width: 1px; height: 28px; background: #414d5c; flex: none; margin: 0 17px 0 0; }
.d1 { margin: 0 17px 0 16px; }
.services { display: flex; align-items: center; gap: 8px; width: 89px; letter-spacing: -.2px; }
b { font-weight: 600; }
.services b, .region b, .account b { white-space: nowrap; }
.global-search { width: 450px; height: 29px; background: #12181f; border: 1px solid #8d99a8; border-radius: 2px; display: flex; align-items: center; padding: 0 8px 0 9px; margin-right: 17px; color: #aab7b8; font-size: 14px; }
.gs-ic { color: #d5dbdb; }
.gs-t { font-style: italic; color: #95a5a6; margin-left: 10px; flex: 1; white-space: nowrap; padding-bottom: 2px; }
.gs-k { color: #95a5a6; letter-spacing: .3px; padding-bottom: 2px; }
.nic { width: 16px; margin-right: 16px; display: flex; justify-content: center; }
.region { display: flex; align-items: center; gap: 4px; width: 94px; letter-spacing: -.1px; }
.wc { color: #fff; flex: none; }
.account { display: flex; align-items: center; gap: 5px; white-space: nowrap; }

.bookmarks { height: 29px; display: flex; align-items: center; padding-left: 19px; font-size: 13px; overflow: hidden; position: relative; }
.bm { display: flex; align-items: center; gap: 5px; margin-right: 18px; white-space: nowrap; font-weight: 500; letter-spacing: -.17px; }
.bmi { width: 16px; height: 16px; flex: none; }
.c-pur { background: linear-gradient(45deg, #4d27a8, #a166ff); }
.c-grn { background: linear-gradient(45deg, #1b660f, #6cae3e); }
.c-org { background: linear-gradient(45deg, #c8511b, #ff9900); }
.c-pnk { background: linear-gradient(45deg, #b0084d, #ff4f8b); }
.c-dk { background: linear-gradient(45deg, #1d2630, #3f4954); }
.c-red { background: linear-gradient(45deg, #bd0816, #ff5252); }
.c-blu { background: linear-gradient(45deg, #2e27ad, #527fff); }
.bm-cut { margin-right: 0; width: 36px; overflow: hidden; flex: none; }
.bm-next { color: #8d99a8; position: absolute; left: 1342px; top: 6px; }

/* main */
.main { flex: 1; min-height: 0; display: flex; background: #f2f3f3; border-top: 1px solid #414d5c; }
.side { width: 251px; flex: none; display: flex; background: #fff; height: 100%; overflow: hidden; border-right: 1px solid #d0d0d0; }
.side-in { width: 233px; flex: none; }
.side-h { height: 64px; display: flex; align-items: center; justify-content: space-between; padding: 0 22px 0 32px; border-bottom: 1px solid #eaeded; }
.side-title { font-size: 17.200px; font-weight: 700; letter-spacing: -.15px; line-height: 60px; margin-top: -2px; }
.side-l { padding-top: 16px; color: #545b64; font-size: 14px; letter-spacing: -.18px; }
.side-l li { height: 30px; line-height: 30px; padding-left: 32px; white-space: nowrap; }
.side-l .sub { padding-left: 52px; }
.side-l .act { color: #ec7211; font-weight: 700; letter-spacing: -.4px; }
.side-hr { border: 0; border-top: 1px solid #eaeded; margin: 20px 20px 0; }
.side-l2 { padding-top: 20px; }
.side-reg { margin-top: 20px; padding-left: 12px; display: flex; align-items: center; gap: 9px; font-size: 14px; color: #545b64; height: 30px; letter-spacing: -.2px; }
.side-reg svg { color: #545b64; }
.side-reg b { font-weight: 700; }
.side-l3 { padding-top: 2px; }
.feedback { margin: 51px 0 0 21px; font-size: 14px; line-height: 19px; font-weight: 600; color: #545b64; }

.scr { width: 17px; flex: none; background: #f1f1f1; display: flex; flex-direction: column; align-items: center; height: 100%; padding-top: 7px; color: #505050; }
.scr-a { flex: none; }
.thumb { width: 13px; background: #bcbcbc; flex: none; }
.th-side { height: 493px; margin-top: 5px; }
.side-scr .scr-a:last-child { margin-top: 25px; }

.content { flex: 1; min-width: 0; height: 100%; padding-left: 20px; position: relative; }
.crumbs { height: 60px; display: flex; align-items: center; gap: 10px; padding: 2px 0 0 19px; font-size: 14px; color: #687078; letter-spacing: -.2px; }
.crumbs a { color: #0073bb; }
.crumbs .cr-2 { margin-left: 1px; letter-spacing: -.1px; }
.crumbs svg { color: #aab7b8; flex: none; }
.crumbs span { color: #545b64; margin-left: 2px; letter-spacing: -.1px; }
.cols { display: flex; align-items: flex-start; height: 490px; }

.card { background: #fafafa; box-shadow: 0 0 1px rgba(0, 28, 36, .35), 0 1px 1px rgba(0, 28, 36, .25); }
.stacks { width: 344px; flex: none; }
.st-h { height: 86px; padding: 28px 21px 0 28px; display: flex; align-items: flex-start; }
.minus { margin-top: 9px; margin-right: 6px; }
.h2 { font-size: 17px; line-height: 30px; font-weight: 700; white-space: nowrap; }
.h2 span { font-weight: 400; color: #687078; }
.st-h .h2 { flex: 1; }
.rbtn { width: 50px; height: 32px; border: 1px solid #545b64; border-radius: 2px; color: #545b64; display: flex; align-items: center; justify-content: center; }
.filter { margin-left: 27px; width: 290px; height: 32px; background: #fff; border: 1px solid #aab7b8; border-radius: 2px; display: flex; align-items: center; padding-left: 8px; color: #687078; gap: 8px; }
.filter span { font-size: 14px; font-style: italic; color: #aab7b8; padding-bottom: 2px; }
.st-ctl { display: flex; padding: 25px 0 0 22px; height: 93px; }
.select { width: 140px; height: 32px; background: #fff; border: 1px solid #aab7b8; border-radius: 2px; display: flex; align-items: center; justify-content: space-between; padding: 0 9px 2px 8px; font-size: 14px; color: #545b64; }
.select svg { color: #545b64; }
.st-right { margin-left: 20px; width: 140px; }
.nested { display: flex; align-items: center; gap: 8px; font-size: 14px; color: #16191f; margin-top: 1px; height: 20px; letter-spacing: -.18px; }
.toggle { width: 24px; height: 16px; border-radius: 8px; background: #0073bb; position: relative; flex: none; }
.toggle::after { content: ""; position: absolute; right: 2px; top: 2px; width: 12px; height: 12px; background: #fff; border-radius: 50%; }
.pager { display: flex; align-items: center; margin-top: 5px; padding-left: 60px; color: #aab7b8; }
.pager b { font-size: 14px; font-weight: 700; color: #16191f; width: 52px; text-align: center; }
.row { display: flex; justify-content: space-between; padding: 11px 20px 0 22px; background: #fff; height: 92px; }
.row-sel { background: #f1faff; border: 1px solid #00a1c9; height: 102px; padding: 19px 20px 0 21px; }
.nm { font-size: 14.600px; line-height: 21px; }
.dt { font-size: 13.200px; line-height: 20px; color: #545b64; margin-top: 4px; }
.row-2 .dt { margin-top: 5px; }
.stat { display: flex; align-items: center; gap: 5px; font-size: 13.700px; line-height: 20px; color: #1d8102; margin: 3px 0 0 -1px; }
.row-2 .stat { margin-top: 1px; margin-left: 0; gap: 4px; }
.radio { width: 15px; height: 15px; border-radius: 50%; border: 1px solid #aab7b8; background: #fff; margin-top: 15px; flex: none; }
.radio.on { border: 4.500px solid #0073bb; margin-top: 6px; }

.right { width: 692px; flex: none; margin-left: 21px; position: relative; margin-top: -12px; }
.ticks { height: 1px; position: relative; margin-left: 115px; display: flex; }
.ticks i { width: 1px; height: 2px; background: #aab7b8; flex: none; }
.ticks i:nth-child(1) { margin-right: 91px; }
.ticks i:nth-child(2) { margin-right: 111px; }
.ticks i:nth-child(3) { margin-right: 101px; }
.ticks i:nth-child(4) { margin-right: 123px; }
.ticks i:nth-child(5) { margin-right: 109px; }
.tabline { margin: 14px 0 0 321px; width: 100px; height: 2px; background: #16191f; }
.rtabs { height: 63px; border-bottom: 1px solid #aab7b8; padding: 19px 0 0 23px; font-size: 14px; font-weight: 600; color: #545b64; line-height: 21px; letter-spacing: -.1px; }
.outputs { margin-top: 22px; height: 347px; }
.out-h { height: 66px; padding: 20px 17px 0 23px; display: flex; justify-content: space-between; }
.out-s { display: flex; align-items: flex-start; height: 49px; border-bottom: 1px solid #eaeded; padding-left: 22px; }
.filter-o { width: 610px; margin-left: 0; padding-left: 10px; gap: 11px; }
.filter-o span { font-size: 14.700px; }
.gear { margin: 7px 0 0 17px; }
.tbl { display: grid; grid-template-columns: 260px 190px 140px 102px; grid-template-rows: 94px 137px; }
.th { border-bottom: 1px solid #eaeded; padding: 0 20px 2px 24px; display: flex; align-items: center; justify-content: space-between; font-size: 14px; font-weight: 700; line-height: 21px; color: #16191f; position: relative; }
.th-d { color: #545b64; padding-left: 23px; padding-right: 20px; }
.th-d::before { content: ""; position: absolute; left: 0; top: 24px; height: 46px; width: 1px; background: #eaeded; }
.th-l { padding-right: 20px; }
.so { color: #879596; flex: none; }
.so-d { color: #16191f; }
.so-e { align-self: flex-end; margin-bottom: 30px; }
.so-n { align-self: flex-end; margin-bottom: 19px; }
.td { background: #fff; font-size: 14.400px; line-height: 21px; display: flex; align-items: center; color: #16191f; white-space: nowrap; }
.td-1 { padding-left: 23px; }
.td-2 { padding-left: 22px; align-items: flex-start; padding-top: 15px; font-size: 15px; }
.td-2 a { color: #0073bb; }
.td-3 { padding-left: 22px; }
.td-4 { padding-left: 22px; }

.main-scr { margin-left: 11px; margin-top: -12px; height: 502px; padding-top: 6px; }
.th-main { height: 367px; margin-top: 104px; }
.main-scr .scr-a:last-child { margin-top: 5px; }

/* footer */
.foot { height: 35px; flex: none; background: #232f3e; color: #fff; display: flex; align-items: center; font-size: 13px; font-weight: 500; border-top: 1px solid #414d5c; padding: 0 20px 6px 0; }
.f-set { margin-left: 444px; display: flex; align-items: center; gap: 4px; font-weight: 600; letter-spacing: -.1px; }
.f-copy { margin-left: auto; margin-right: 29px; white-space: nowrap; letter-spacing: -.1px; }
.f-l { margin-right: 24px; white-space: nowrap; }
.f-c { margin-right: 0; letter-spacing: -.28px; margin-top: -1px; }

/* taskbar */
.taskbar { height: 43px; flex: none; background: #d6d6d6; display: grid; grid-template-columns: 1fr auto 1fr; align-items: center; }
.weather { display: flex; align-items: center; gap: 10px; padding-left: 30px; font-size: 12px; line-height: 16px; }
.w-t { margin-top: -2px; }
.weather svg { margin-top: -4px; }
.w1 { color: #222; }
.w2 { color: #555; }
.tk-apps { display: flex; height: 43px; }
.app-c { width: 44px; height: 43px; display: flex; align-items: center; justify-content: center; position: relative; }
.tk { width: 24px; height: 24px; margin-top: -3px; }
.dot::after, .run::after { content: ""; position: absolute; left: 19px; bottom: 5px; width: 6px; height: 3px; border-radius: 2px; background: #7e7e7e; }
.hot { background: #f8e6e6; border-radius: 4px; width: 40px; margin: 0 2px; }
.hot::after { background: #d92b2b; left: 17px; }
.run { background: #eeeeee; border-radius: 4px; width: 40px; margin: 0 2px; }
.run::after { background: #1b8b9a; left: 10px; width: 20px; bottom: 3px; }
.tray { display: flex; align-items: center; justify-content: flex-end; padding-right: 21px; }
.t-cloud { margin-left: 16px; }
.t-wifi { margin-left: 15px; }
.t-vol { margin-left: 8px; }
.t-bat { margin-left: 8px; }
.clock { margin: -2px 0 0 16px; font-size: 12px; line-height: 20px; text-align: right; color: #222; white-space: nowrap; }
.t-moon { margin-left: 8px; }

.status { position: absolute; left: 0; top: 699px; width: 453px; height: 21px; background: #aeb1b6; border-radius: 0 4px 0 0; font-size: 12px; line-height: 21px; padding-left: 5px; color: #222; white-space: nowrap; overflow: hidden; letter-spacing: -.3px; }
```
